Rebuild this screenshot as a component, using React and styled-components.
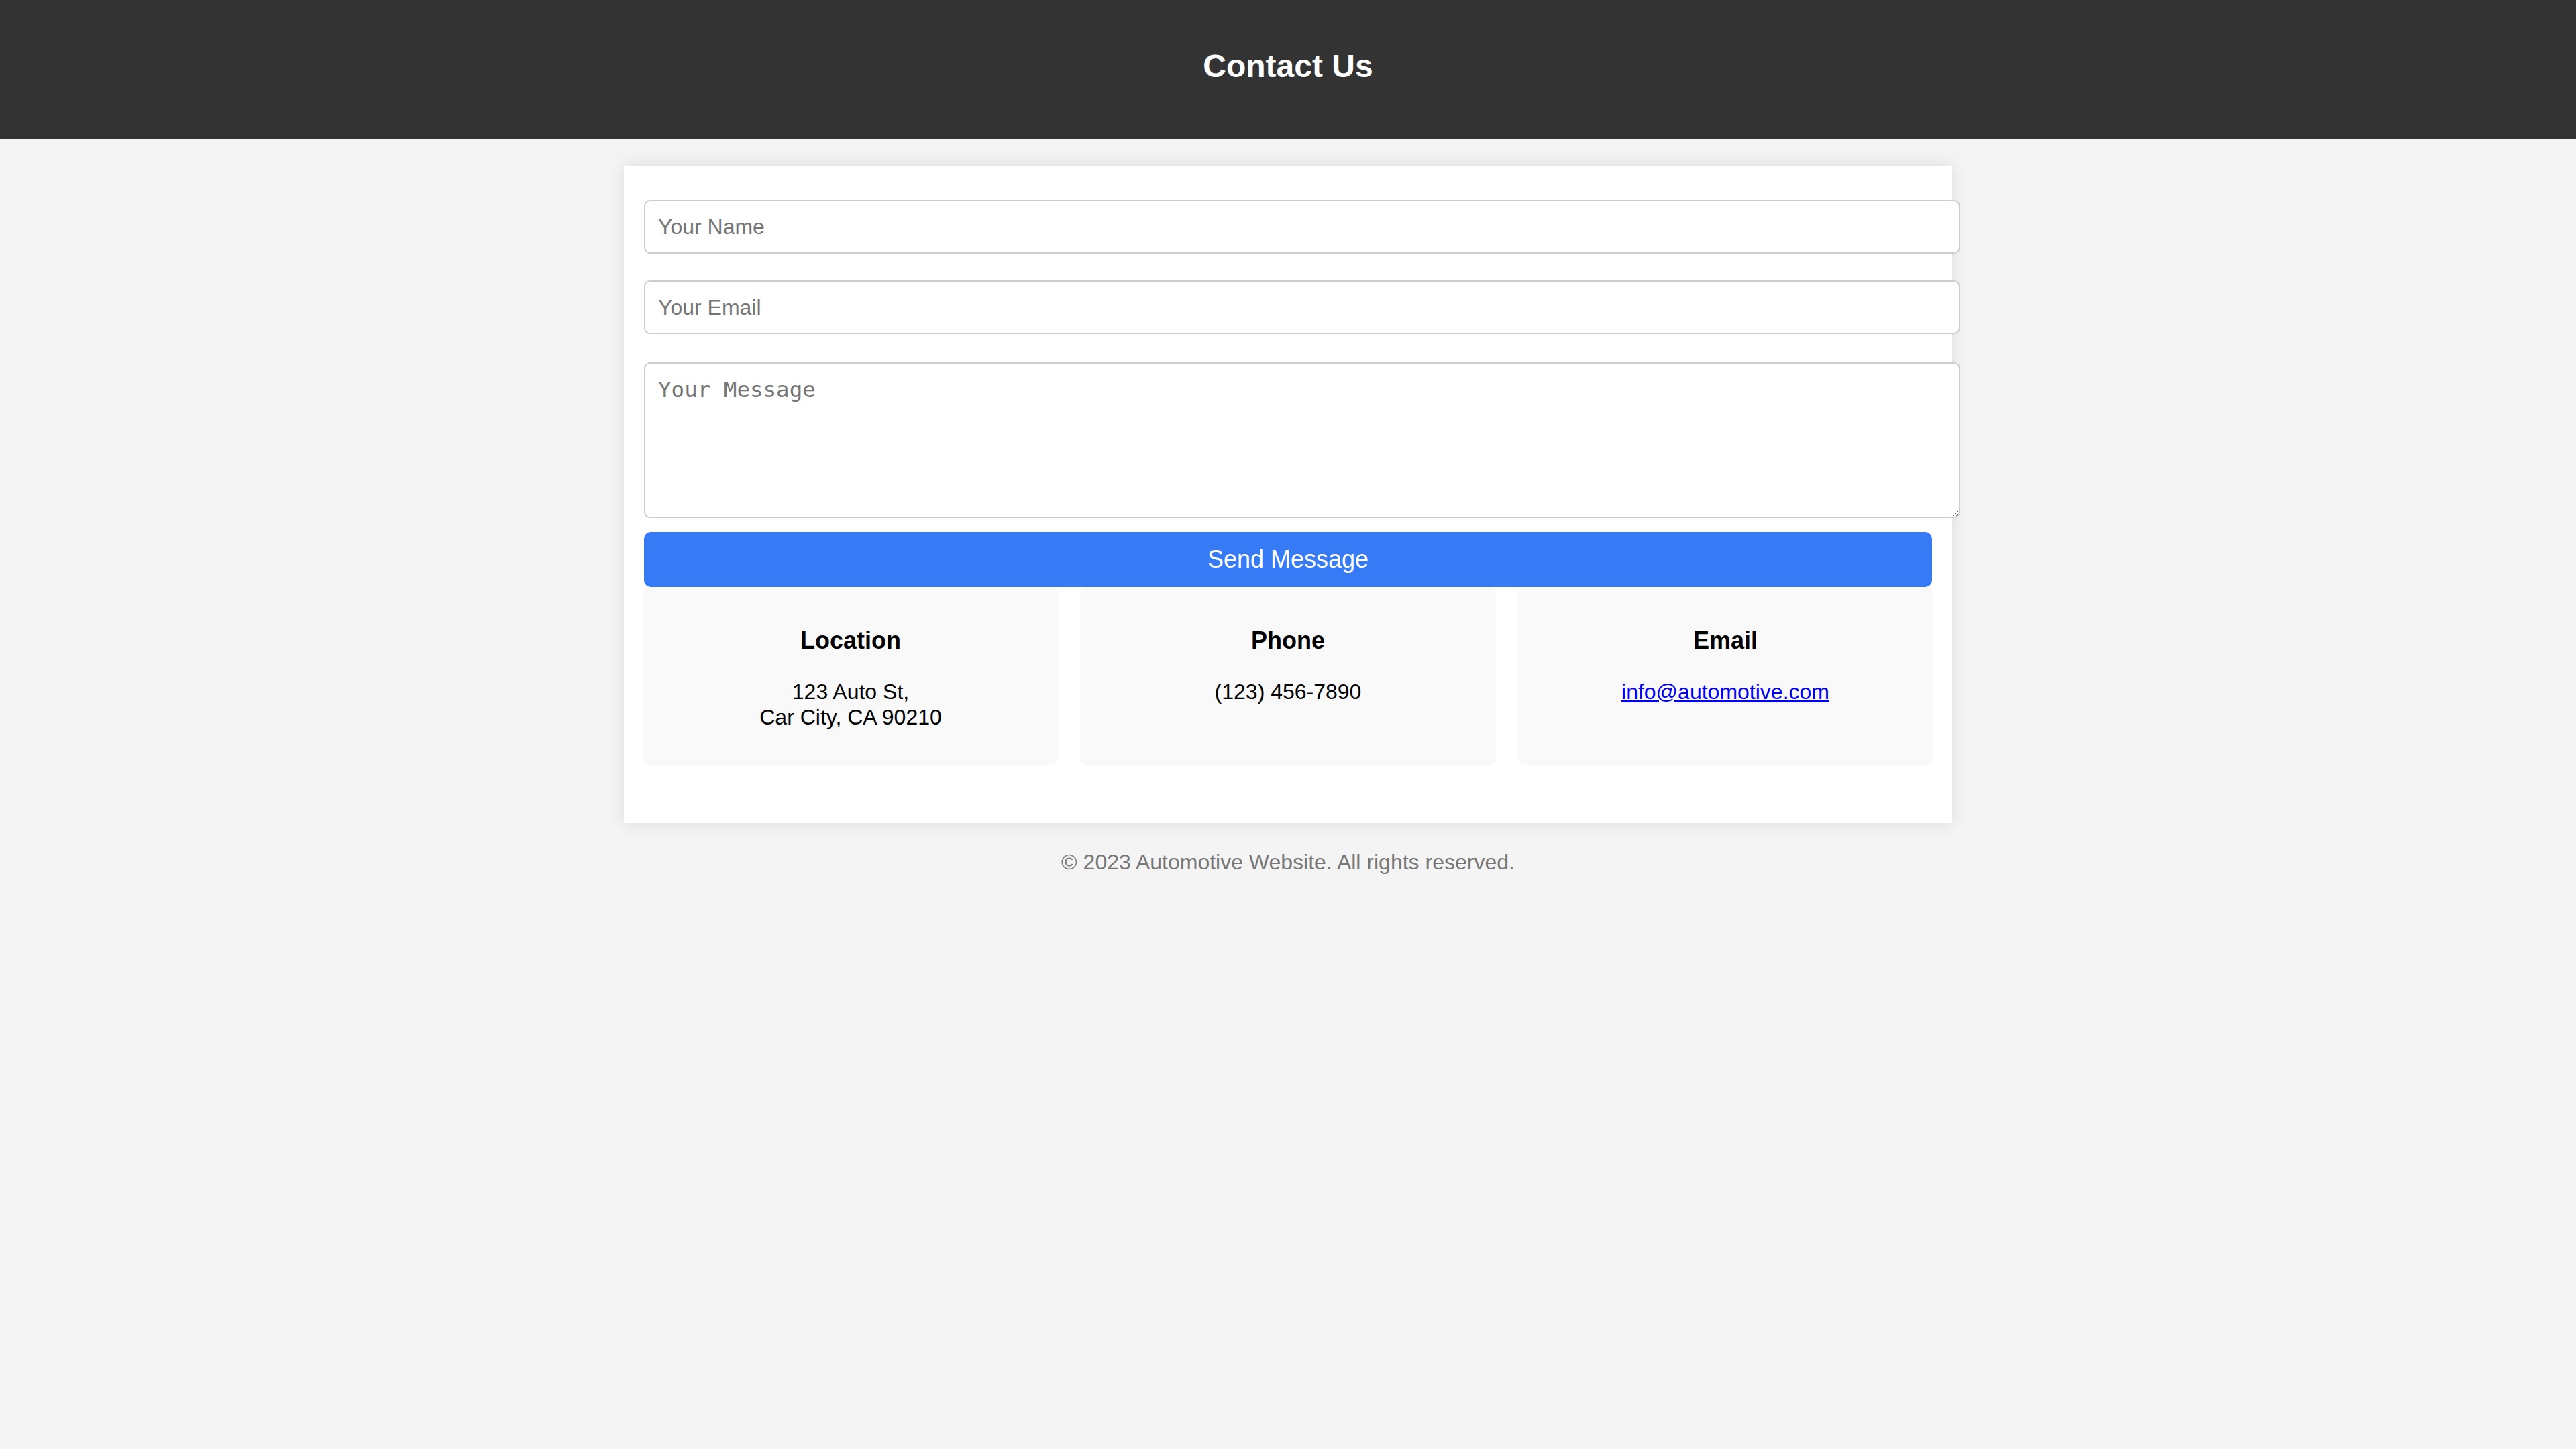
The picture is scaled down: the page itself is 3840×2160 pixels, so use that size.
import React from "react";
import styled, { createGlobalStyle } from "styled-components";

const Global = createGlobalStyle`
  html, body {
    margin: 0;
    padding: 0;
    background: #f4f4f4;
    font-family: "Liberation Sans", Arial, sans-serif;
    color: #000;
  }
`;

const Header = styled.header`
  background: #333;
  color: #fff;
  text-align: center;
  padding: 71px 0 81px;
`;

const Title = styled.h1`
  margin: 0;
  font-size: 48px;
  font-weight: 700;
  line-height: normal;
`;

const Container = styled.main`
  width: 1920px;
  margin: 40px auto 0;
  padding: 30px;
  background: #fff;
  box-shadow: 0 0 24px rgba(0, 0, 0, 0.1);
`;

const Form = styled.form`
  display: flex;
  flex-direction: column;
  align-items: flex-start;
  padding-top: 21px;
`;

const fieldBase = `
  display: block;
  width: 100%;
  box-sizing: content-box;
  padding: 19.5px 19px;
  border: 2px solid #ccc;
  border-radius: 9px;
  background: #fff;
  color: #000;
  outline: none;
  &::placeholder { color: #757575; }
`;

const Input = styled.input`
  ${fieldBase}
  font-family: "Liberation Sans", Arial, sans-serif;
  font-size: 32px;
  line-height: normal;
  margin-bottom: ${(p) => p.$mb}px;
`;

const TextArea = styled.textarea`
  ${fieldBase}
  box-sizing: border-box;
  width: calc(100% + 42px);
  height: 232px;
  padding: 20px 19px;
  font-family: "DejaVu Sans Mono", monospace;
  font-size: 32.5px;
  margin-bottom: 21px;
  resize: both;
`;

const Button = styled.button`
  width: 100%;
  padding: 20px;
  border: none;
  border-radius: 10px;
  background: #377af5;
  color: #fff;
  font-family: "Liberation Sans", Arial, sans-serif;
  font-size: 36px;
  line-height: normal;
  cursor: pointer;
`;

const Cards = styled.section`
  display: flex;
  gap: 36px;
  margin-bottom: 60px;
`;

const Card = styled.div`
  flex: 1;
  background: #f9f9f9;
  border-radius: 10px;
  padding: 23px 20px 17px;
  text-align: center;
  box-shadow: 0 2px 5px rgba(0, 0, 0, 0.06);
`;

const CardTitle = styled.h3`
  margin: 36px 0 37px;
  font-size: 36px;
  font-weight: 700;
  line-height: normal;
`;

const CardText = styled.p`
  margin: 32px 0;
  font-size: 32px;
  line-height: 37.5px;
`;

const Link = styled.a`
  color: #0000ee;
  text-decoration: underline;
`;

const Footer = styled.footer`
  padding-top: 40px;
  text-align: center;
  color: #777;
  font-size: 32px;
  line-height: normal;
`;

export default function App() {
  return (
    <>
      <Global />
      <Header>
        <Title>Contact Us</Title>
      </Header>
      <Container>
        <Form onSubmit={(e) => e.preventDefault()}>
          <Input type="text" placeholder="Your Name" $mb={40} />
          <Input type="email" placeholder="Your Email" $mb={42} />
          <TextArea placeholder="Your Message" />
          <Button type="submit">Send Message</Button>
        </Form>
        <Cards>
          <Card>
            <CardTitle>Location</CardTitle>
            <CardText>
              123 Auto St,
              <br />
              Car City, CA 90210
            </CardText>
          </Card>
          <Card>
            <CardTitle>Phone</CardTitle>
            <CardText>(123) 456-7890</CardText>
          </Card>
          <Card>
            <CardTitle>Email</CardTitle>
            <CardText>
              <Link href="mailto:info@automotive.com">info@automotive.com</Link>
            </CardText>
          </Card>
        </Cards>
      </Container>
      <Footer>© 2023 Automotive Website. All rights reserved.</Footer>
    </>
  );
}
